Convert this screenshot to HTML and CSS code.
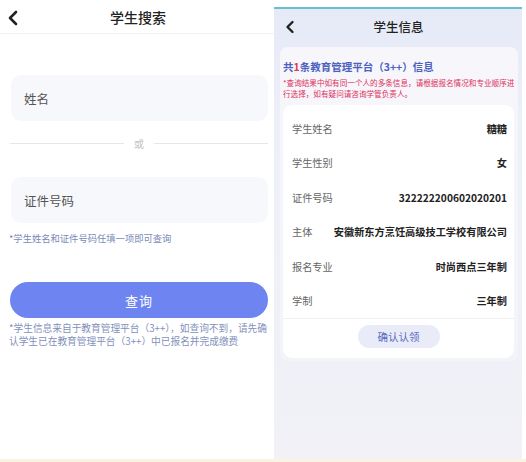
FILE: index.html
```html
<!DOCTYPE html>
<html lang="zh">
<head>
<meta charset="utf-8">
<link rel="stylesheet" href="styles.css">
</head>
<body>
<div class="wrap">
  <section class="left">
    <header class="hdr">
      <svg class="back" width="12" height="16" viewBox="0 0 12 16"><path d="M9 2 L3 8 L9 14" fill="none" stroke="#222" stroke-width="2.6" stroke-linecap="round" stroke-linejoin="round"/></svg>
      <h1 class="title">学生搜索</h1>
    </header>
    <div class="form">
      <div class="input">姓名</div>
      <div class="or"><span class="ln"></span><span class="ortxt">或</span><span class="ln"></span></div>
      <div class="input">证件号码</div>
      <p class="hint">*学生姓名和证件号码任填一项即可查询</p>
      <button class="btn">查询</button>
      <p class="note">*学生信息来自于教育管理平台（3++），如查询不到，请先确认学生已在教育管理平台（3++）中已报名并完成缴费</p>
    </div>
  </section>
  <section class="right">
    <header class="hdr2">
      <svg class="back2" width="10" height="14" viewBox="0 0 10 14"><path d="M7.5 2 L2.5 7 L7.5 12" fill="none" stroke="#222" stroke-width="2.4" stroke-linecap="round" stroke-linejoin="round"/></svg>
      <h2 class="title2">学生信息</h2>
    </header>
    <div class="panel">
      <div class="ptitle">共<span class="red">1</span>条教育管理平台（3++）信息</div>
      <p class="pnote">*查询结果中如有同一个人的多条信息，请根据报名情况和专业顺序进行选择，如有疑问请咨询学管负责人。</p>
      <div class="card">
        <div class="row"><span class="lbl">学生姓名</span><span class="val">糖糖</span></div>
        <div class="row"><span class="lbl">学生性别</span><span class="val">女</span></div>
        <div class="row"><span class="lbl">证件号码</span><span class="val">322222200602020201</span></div>
        <div class="row"><span class="lbl">主体</span><span class="val">安徽新东方烹饪高级技工学校有限公司</span></div>
        <div class="row"><span class="lbl">报名专业</span><span class="val">时尚西点三年制</span></div>
        <div class="row"><span class="lbl">学制</span><span class="val">三年制</span></div>
        <div class="cbtnwrap"><button class="cbtn">确认认领</button></div>
      </div>
    </div>
  </section>
</div>
<div class="foot"></div>
</body>
</html>
```
FILE: styles.css
```css
* { box-sizing: border-box; }
html, body { margin: 0; padding: 0; }
body {
  width: 526px; height: 462px; overflow: hidden;
  background: #fff;
  font-family: "Noto Sans CJK SC", "Noto Sans", sans-serif;
  position: relative;
}
.wrap { display: flex; height: 459px; }
.left { width: 274px; background: #fff; }
.hdr { height: 34px; display: flex; align-items: center; justify-content: center; position: relative; border-bottom: 1px solid #f3f3f3; }
.back { position: absolute; left: 7px; top: 10px; }
.title { margin: 0; font-size: 14px; font-weight: 500; color: #222; padding-left: 2px; }
.form { padding: 41px 6px 0 11px; }
.input {
  height: 46px; background: #f7f8fc; border-radius: 10px;
  display: flex; align-items: center; padding-left: 13px;
  font-size: 12.5px; color: #555;
}
.or { display: flex; align-items: center; height: 44px; margin: 0 0 12px -1px; }
.ln { flex: 1; height: 1px; background: #e6e6e6; }
.ortxt { font-size: 10px; color: #c4c4c4; padding: 0 10px; }
.hint { margin: 8px 0 0 -2px; font-size: 9.3px; color: #7b88b8; line-height: 14px; }
.btn {
  display: block; width: 258px; height: 36px; margin: 37px 0 0 -1px;
  border: none; border-radius: 18px; background: #6d84f1;
  color: #fff; font-family: inherit; font-size: 13px; letter-spacing: 1px;
}
.note { margin: 4px 0 0 -2px; font-size: 9.7px; line-height: 13px; color: #8391bb; width: 262px; }
.right {
  width: 248px; margin-top: 7px;
  background: linear-gradient(180deg, #e6eaf7 0%, #eef0f9 30%, #f1f1f7 100%);
  border-top: 2px solid #68bfd0;
}
.hdr2 { height: 35px; display: flex; align-items: center; justify-content: center; position: relative; }
.back2 { position: absolute; left: 11px; top: 11px; }
.title2 { margin: 0; font-size: 12.5px; font-weight: 500; color: #222; padding-left: 1px; }
.panel {
  margin: 3px 4px 0 6px; border-radius: 8px; padding: 13px 1px 3px 3px;
  background: linear-gradient(180deg, #f6f6fb 0%, #f3f4fa 100%);
}
.ptitle { font-size: 10.5px; font-weight: 700; color: #4d61bf; line-height: 14px; }
.red { color: #e23a4f; }
.pnote { margin: 3px 0 0 0; font-size: 7.6px; line-height: 11px; color: #e0305c; }
.card {
  margin-top: 6px; background: #fff; border-radius: 9px; margin-right: 3px;
  padding: 6px 7px 4px 9px;
}
.row { height: 34.5px; display: flex; align-items: center; justify-content: space-between; font-size: 10.2px; }
.lbl { color: #666; }
.val { color: #222; font-weight: 700; }
.cbtnwrap { display: flex; justify-content: center; padding: 6px 0 6px; border-top: 1px solid #f0f0f0; margin: 0 -7px 0 -9px; }
.cbtn {
  width: 82px; height: 23px; border: none; border-radius: 12px;
  background: #e9ecf8; color: #5a6bbf; font-family: inherit; font-size: 10.5px;
}
.foot { height: 3px; background: #fbf3e2; }
```
